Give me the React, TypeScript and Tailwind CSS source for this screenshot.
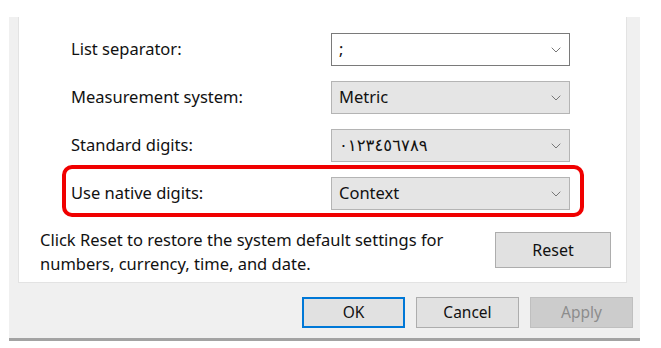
import React from 'react';

const Chevron = () => (
  <svg width="10" height="6" viewBox="0 0 10 6" fill="none" className="shrink-0">
    <path d="M0.7 0.7 L5 5 L9.3 0.7" stroke="#777" strokeWidth="1" />
  </svg>
);

interface DropdownProps {
  value: string;
  focused?: boolean;
}

const Dropdown: React.FC<DropdownProps> = ({ value, focused }) => (
  <div
    className={
      focused
        ? 'flex items-center justify-between w-[239px] h-[33px] pl-[7px] pr-[8px] bg-white border border-[#7a7a7a]'
        : 'flex items-center justify-between w-[239px] h-[33px] pl-[7px] pr-[8px] bg-[#e5e5e5] border border-[#b4b4b4]'
    }
  >
    <span className="text-[16.5px] text-[#111]">{value}</span>
    <Chevron />
  </div>
);

const Row: React.FC<{ label: string; value: string; focused?: boolean }> = ({ label, value, focused }) => (
  <div className="flex items-center">
    <span className="w-[260px] text-[16.5px] text-[#111]">{label}</span>
    <Dropdown value={value} focused={focused} />
  </div>
);

export default function App() {
  return (
    <div
      className="w-[661px] h-[348px] bg-white overflow-hidden"
      style={{ fontFamily: '"Noto Sans", "DejaVu Sans", sans-serif' }}
    >
      <div className="ml-[9px] mt-[17px] w-[631px] h-[324px] bg-[#f0f0f0] border-b-[3px] border-[#a3a3a3] flex flex-col">
        <div className="ml-[9px] w-[609px] h-[266px] bg-white border-x border-b border-[#e3e3e3]">
          <div className="flex flex-col gap-[15px] pl-[52px] pt-[16px]">
            <Row label="List separator:" value=";" focused />
            <Row label="Measurement system:" value="Metric" />
            <Row label="Standard digits:" value="٠١٢٣٤٥٦٧٨٩" />
            <div className="-ml-[9px] -mr-[14px] -mt-[12px] -mb-[7px] w-[522px] border-4 border-[#f00000] rounded-[10px] pl-[5px] pt-[8px] pb-[3px]">
              <Row label="Use native digits:" value="Context" />
            </div>
          </div>
          <div className="flex items-start mt-[18px] pl-[21px] pr-[15px]">
            <p className="w-[440px] text-[16.5px] leading-[24px] text-[#111]">
              Click Reset to restore the system default settings for numbers, currency, time, and date.
            </p>
            <button className="ml-auto mt-[4px] w-[116px] h-[36px] bg-[#e1e1e1] border border-[#adadad] text-[16px] text-[#111]">
              Reset
            </button>
          </div>
        </div>
        <div className="flex justify-end gap-[11px] pr-[7px] mt-[14px]">
          <button className="w-[103px] h-[31px] bg-[#e1e1e1] border-2 border-[#0078d7] text-[15.5px] text-[#111]">
            OK
          </button>
          <button className="w-[103px] h-[31px] bg-[#e1e1e1] border border-[#adadad] text-[15.5px] text-[#111]">
            Cancel
          </button>
          <button className="w-[103px] h-[31px] bg-[#cccccc] border border-[#bfbfbf] text-[15.5px] text-[#8c8c8c]">
            Apply
          </button>
        </div>
      </div>
    </div>
  );
}
